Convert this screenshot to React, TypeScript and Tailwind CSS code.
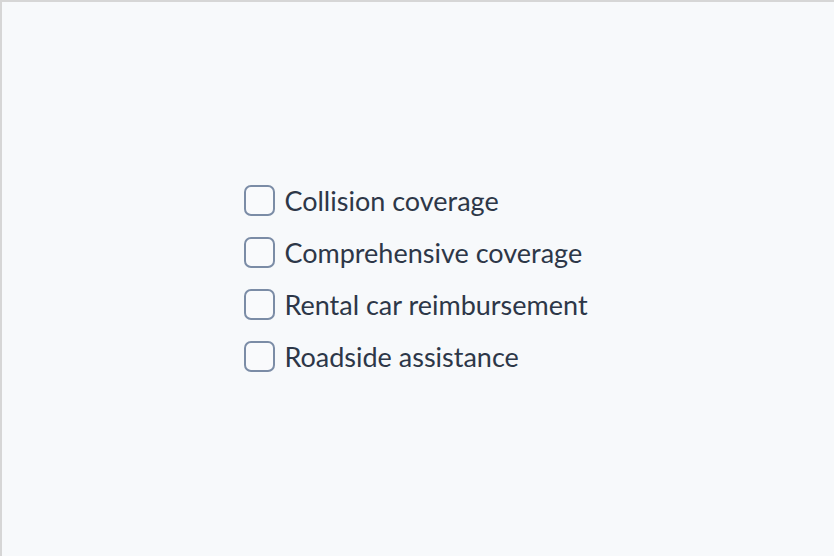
import React from 'react';

const options = [
  'Collision coverage',
  'Comprehensive coverage',
  'Rental car reimbursement',
  'Roadside assistance',
];

export default function App() {
  return (
    <div className="h-[556px] w-[834px] border-l-2 border-t-2 border-[#d6d6d6] bg-[#f7f9fb] flex items-center justify-center pr-[4px] pb-[2px]">
      <div className="flex flex-col gap-[21px] font-['Lato',sans-serif] text-[27px] text-[#2d3748]">
        {options.map(label => (
          <label key={label} className="flex items-center gap-[9px] h-[31px] leading-none cursor-pointer">
            <input type="checkbox" className="peer sr-only" />
            <span className="w-[31px] h-[31px] rounded-[7px] border-2 border-[#7b8ca6] bg-[#f9fafc] shrink-0" />
            <span>{label}</span>
          </label>
        ))}
      </div>
    </div>
  );
}
